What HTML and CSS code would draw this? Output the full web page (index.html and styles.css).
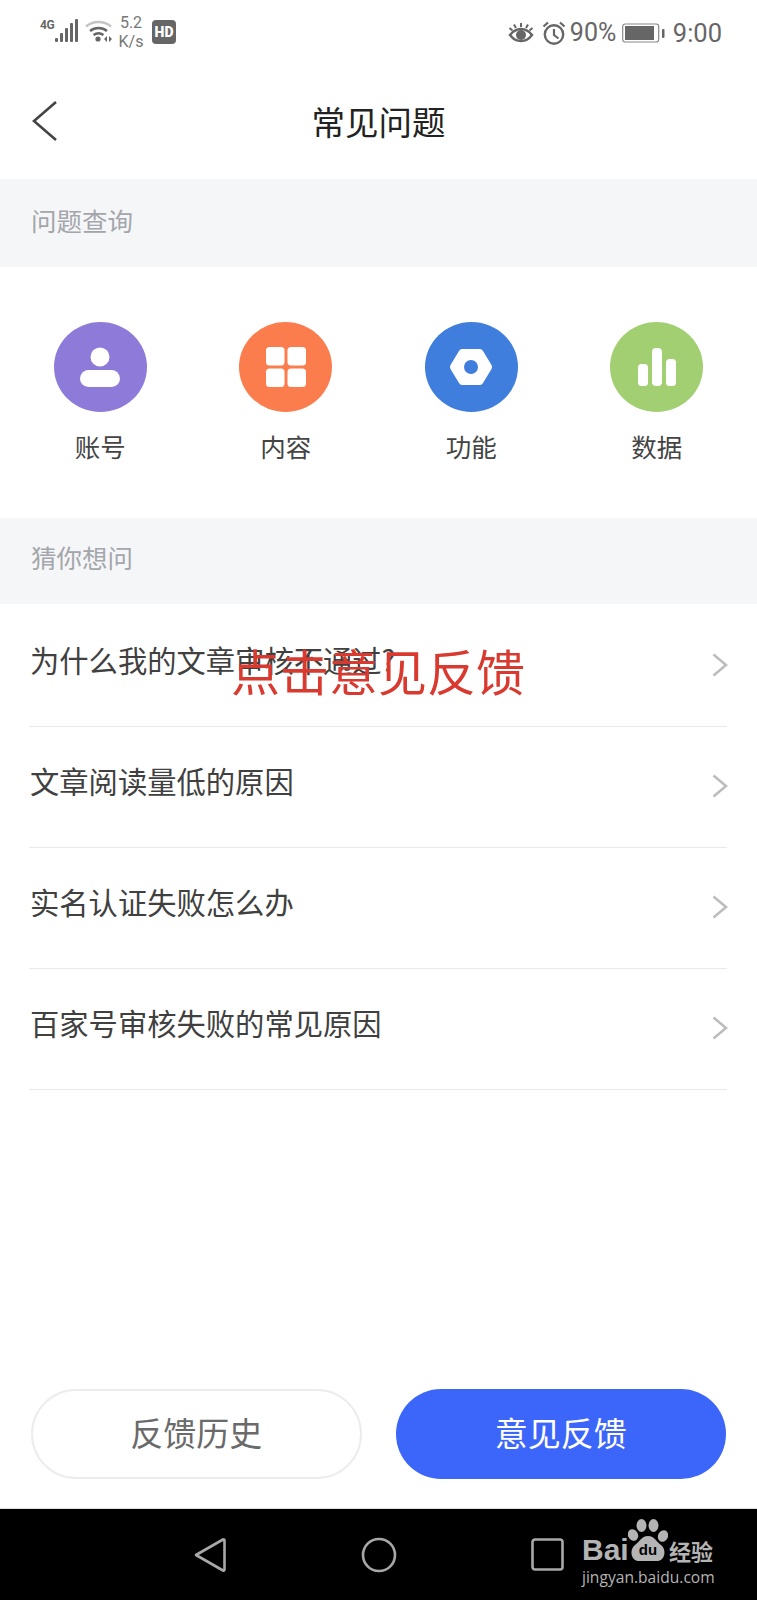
FILE: index.html
```html
<!DOCTYPE html>
<html lang="zh-CN">
<head>
<meta charset="utf-8">
<title>常见问题</title>
<link rel="stylesheet" href="styles.css">
</head>
<body>
<div class="page">
  <div class="status">
    <div class="status-left">
      <span class="net">4G</span>
      <svg class="signal" width="24" height="24" viewBox="0 0 24 24"><g fill="#666"><rect x="0" y="19" width="3" height="4" rx="1"/><rect x="5" y="14" width="3" height="9" rx="1"/><rect x="10" y="9" width="3" height="14" rx="1"/><rect x="15" y="4" width="3" height="19" rx="1"/><rect x="20" y="0" width="3" height="23" rx="1"/></g></svg>
      <svg class="wifi" width="28" height="24" viewBox="0 0 28 24"><path d="M1 7.5C8 1.5 19 1.5 26 7.5" fill="none" stroke="#c4c4c4" stroke-width="2.4"/><path d="M5 12C10 8 17 8 22 12" fill="none" stroke="#666" stroke-width="2.4"/><path d="M8.5 16C11.5 13.800 15.500 13.800 18.500 16" fill="none" stroke="#666" stroke-width="2.400"/><circle cx="13" cy="20" r="2.600" fill="#666"/><path d="M22 17v6l-3-3zM24 17v6l3-3z" fill="#666"/></svg>
      <span class="speed"><span>5.2</span><span>K/s</span></span>
      <span class="hd">HD</span>
    </div>
    <div class="status-right">
      <svg class="eye" width="26" height="24" viewBox="0 0 26 24"><path d="M2 14C8 6 18 6 24 14C18 22 8 22 2 14Z" fill="none" stroke="#666" stroke-width="2.500"/><circle cx="13" cy="14" r="5" fill="#666"/><path d="M13 2v4M6 3.500l2 3.500M20 3.500l-2 3.500M1.500 7l3 2.500M24.500 7l-3 2.500" stroke="#666" stroke-width="2" fill="none"/></svg>
      <svg class="alarm" width="24" height="24" viewBox="0 0 24 24"><circle cx="12" cy="13.500" r="9.200" fill="none" stroke="#666" stroke-width="2.400"/><path d="M12 8v6l4.500 3.500" fill="none" stroke="#666" stroke-width="2.200"/><path d="M1.500 5.500L6 1.500M22.500 5.500L18 1.500" stroke="#666" stroke-width="2.200" fill="none"/></svg>
      <span class="pct">90%</span>
      <svg class="battery" width="43" height="20" viewBox="0 0 43 20"><rect x="0.700" y="1" width="36" height="18" rx="2.500" fill="none" stroke="#888" stroke-width="1.200"/><rect x="3" y="3" width="29" height="14" fill="#666"/><rect x="40" y="6" width="2.500" height="9" rx="1" fill="#666"/></svg>
      <span class="time">9:00</span>
    </div>
  </div>

  <header class="header">
    <svg class="back" width="26" height="42" viewBox="0 0 26 42"><path d="M24 2L2 21L24 40" fill="none" stroke="#444" stroke-width="2.600"/></svg>
    <h1 class="title">常见问题</h1>
  </header>

  <div class="band band-query">问题查询</div>

  <nav class="cats">
    <a class="cat">
      <span class="disc disc-purple"><svg width="40" height="40" viewBox="0 0 40 40"><circle cx="20" cy="10" r="9.500" fill="#fff"/><rect x="0" y="23" width="40" height="17" rx="8.500" fill="#fff"/></svg></span>
      <span class="cat-label">账号</span>
    </a>
    <a class="cat">
      <span class="disc disc-orange"><svg width="40" height="40" viewBox="0 0 40 40"><g fill="#fff"><rect x="0" y="0" width="18.500" height="18.500" rx="3.500"/><rect x="21.500" y="0" width="18.500" height="18.500" rx="3.500"/><rect x="0" y="21.500" width="18.500" height="18.500" rx="3.500"/><rect x="21.500" y="21.500" width="18.500" height="18.500" rx="3.500"/></g></svg></span>
      <span class="cat-label">内容</span>
    </a>
    <a class="cat">
      <span class="disc disc-blue"><svg width="44" height="38" viewBox="0 0 44 38"><path d="M13 1H31Q33 1 34 3L42.500 17Q43.500 19 42.500 21L34 35Q33 37 31 37H13Q11 37 10 35L1.500 21Q0.500 19 1.500 17L10 3Q11 1 13 1Z" fill="#fff"/><circle cx="22" cy="19" r="7" fill="#3f7edc"/></svg></span>
      <span class="cat-label">功能</span>
    </a>
    <a class="cat">
      <span class="disc disc-green"><svg width="38" height="38" viewBox="0 0 38 38"><g fill="#fff"><rect x="0" y="16" width="10" height="22" rx="3.500"/><rect x="14" y="0" width="10" height="38" rx="4"/><rect x="28" y="11" width="10" height="27" rx="3.500"/></g></svg></span>
      <span class="cat-label">数据</span>
    </a>
  </nav>

  <div class="band band-guess">猜你想问</div>

  <ul class="faq">
    <li class="faq-row"><span>为什么我的文章审核不通过?</span><svg class="chev" width="16" height="24" viewBox="0 0 16 24"><path d="M1.500 1.500L14 12L1.500 22.500" fill="none" stroke="#bdbdbd" stroke-width="2.600"/></svg></li>
    <li class="faq-row"><span>文章阅读量低的原因</span><svg class="chev" width="16" height="24" viewBox="0 0 16 24"><path d="M1.500 1.500L14 12L1.500 22.500" fill="none" stroke="#bdbdbd" stroke-width="2.600"/></svg></li>
    <li class="faq-row"><span>实名认证失败怎么办</span><svg class="chev" width="16" height="24" viewBox="0 0 16 24"><path d="M1.500 1.500L14 12L1.500 22.500" fill="none" stroke="#bdbdbd" stroke-width="2.600"/></svg></li>
    <li class="faq-row"><span>百家号审核失败的常见原因</span><svg class="chev" width="16" height="24" viewBox="0 0 16 24"><path d="M1.500 1.500L14 12L1.500 22.500" fill="none" stroke="#bdbdbd" stroke-width="2.600"/></svg></li>
  </ul>

  <div class="overlay-note">点击意见反馈</div>

  <div class="actions">
    <button class="btn btn-ghost">反馈历史</button>
    <button class="btn btn-primary">意见反馈</button>
  </div>

  <footer class="navbar">
    <svg class="nav-back" width="32" height="36" viewBox="0 0 32 36"><path d="M2 18L29 2.500Q30.500 2 30.500 3.500V32.500Q30.500 34 29 33.500Z" fill="none" stroke="#a8a8a8" stroke-width="2.600" stroke-linejoin="round"/></svg>
    <svg class="nav-home" width="36" height="36" viewBox="0 0 36 36"><circle cx="18" cy="18" r="16" fill="none" stroke="#a8a8a8" stroke-width="2.600"/></svg>
    <svg class="nav-recent" width="33" height="33" viewBox="0 0 33 33"><rect x="1.500" y="1.500" width="30" height="30" rx="2.500" fill="none" stroke="#a8a8a8" stroke-width="2.600"/></svg>
    <div class="mark">
      <div class="mark-top">
        <span class="mark-bai">Bai</span>
        <span class="mark-paw">
          <svg width="40" height="43" viewBox="0 0 40 43"><g fill="#b4b4b4"><ellipse cx="13.500" cy="6.500" rx="5" ry="6.500"/><ellipse cx="25.500" cy="6.500" rx="5" ry="6.500"/><ellipse cx="5" cy="16" rx="5" ry="6" transform="rotate(-25 5 16)"/><ellipse cx="35" cy="17" rx="5" ry="6" transform="rotate(25 35 17)"/><path d="M20 17C26 17 28 22 33 26C39 31 37 42 29 42H11C3 42 1 31 7 26C12 22 14 17 20 17Z"/></g></svg>
          <span class="mark-du">du</span>
        </span>
        <span class="mark-jy">经验</span>
      </div>
      <div class="mark-url">jingyan.baidu.com</div>
    </div>
  </footer>
</div>
</body>
</html>
```

FILE: styles.css
```css
* { box-sizing: border-box; }
html, body { margin: 0; padding: 0; background: #fff; }
body { font-family: "Noto Sans CJK SC", "Noto Sans", sans-serif; }
.page { position: relative; width: 757px; height: 1600px; display: flex; flex-direction: column; overflow: hidden; }

.status { height: 60px; display: flex; justify-content: space-between; align-items: flex-start; color: #666; }
.status-left { display: flex; align-items: flex-start; padding: 19px 0 0 40px; }
.net { font: 700 12px/12px "Roboto", sans-serif; width: 15px; color: #666; letter-spacing: -0.5px; }
.wifi { margin: 0 0 0 6px; }
.speed { display: flex; flex-direction: column; align-items: center; font: 400 16px/19px "Roboto", sans-serif; margin: -6px 0 0 3px; width: 30px; color: #777; }
.hd { width: 24px; height: 24px; margin: 1px 0 0 6px; border-radius: 4px; background: #666; color: #fff; font: 900 14px/24px "Roboto", sans-serif; text-align: center; }
.status-right { display: flex; align-items: center; padding: 20px 35px 0 0; height: 46px; }
.eye { margin-right: 8px; }
.alarm { margin-right: 4px; }
.pct { font: 400 25px/26px "Roboto", sans-serif; width: 47px; color: #666; }
.battery { margin: 0 8px 0 5px; }
.time { font: 400 25.500px/26px "Roboto", sans-serif; color: #666; }

.header { height: 119px; display: flex; align-items: center; justify-content: center; position: relative; padding-top: 3px; }
.back { position: absolute; left: 32px; top: 40px; }
.title { margin: 0; font-size: 33.500px; font-weight: 400; line-height: 46px; color: #222; }

.band { background: #f5f6f8; color: #a4a6ab; font-size: 25.500px; padding-left: 31px; display: flex; align-items: center; }
.band-query { height: 88px; padding-bottom: 8px; }
.band-guess { height: 86px; padding-bottom: 10px; }

.cats { height: 251px; display: grid; grid-template-columns: repeat(4, 185.500px); padding: 55px 0 0 7.500px; align-content: start; }
.cat { display: flex; flex-direction: column; align-items: center; }
.disc { width: 93px; height: 90px; border-radius: 50%; display: flex; align-items: center; justify-content: center; }
.disc-purple { background: #8d7ad9; }
.disc-orange { background: #fb7d4e; }
.disc-blue { background: #3f7edc; }
.disc-green { background: #a2cf72; }
.cat-label { margin-top: 16px; font-size: 25.500px; line-height: 36px; color: #444; }

.faq { list-style: none; margin: 0; padding: 1.500px 30px 0 29px; }
.faq-row { height: 121px; border-bottom: 1px solid #e9e9e9; display: flex; justify-content: space-between; align-items: flex-start; padding: 32.500px 0 0 1px; font-size: 29.300px; line-height: 42px; color: #404040; }
.chev { margin: 15px -1px 0 0; }

.overlay-note { position: absolute; left: 231px; top: 635px; font-size: 49px; line-height: 70px; font-weight: 400; color: #d93a2f; white-space: nowrap; }

.actions { margin-top: auto; display: grid; grid-template-columns: 1fr 1fr; gap: 34px; padding: 0 31px 29px; }
.btn { height: 90px; border-radius: 45px; font-family: inherit; font-size: 33px; font-weight: 400; padding: 0 0 5px; }
.btn-ghost { background: #fff; border: 2px solid #ececf0; color: #6a6a6a; }
.btn-primary { background: #3c66fa; border: 0; color: #fff; }

.navbar { position: relative; height: 92px; flex: none; background: #000; border-top: 1px solid #ddd; display: flex; align-items: flex-start; padding: 28px 0 0 194px; }
.nav-home { margin-left: 135px; }
.nav-recent { margin: 1px 0 0 134px; }
.mark { position: absolute; left: 582px; top: 10px; width: 140px; color: #b4b4b4; }
.mark-top { display: flex; align-items: flex-end; height: 43px; }
.mark-bai { font: 700 30px/30px "Liberation Sans", sans-serif; width: 46px; margin-bottom: -3px; }
.mark-paw { position: relative; width: 40px; height: 43px; }
.mark-paw svg { display: block; }
.mark-du { position: absolute; left: 8px; top: 23px; width: 24px; text-align: center; font: 700 15px/16px "Liberation Sans", sans-serif; color: #000; }
.mark-jy { font-size: 22px; line-height: 22px; margin: 0 0 1px 1px; font-weight: 700; }
.mark-url { margin-top: 5px; font: 400 15.600px/20px "Open Sans", sans-serif; white-space: nowrap; }
```
